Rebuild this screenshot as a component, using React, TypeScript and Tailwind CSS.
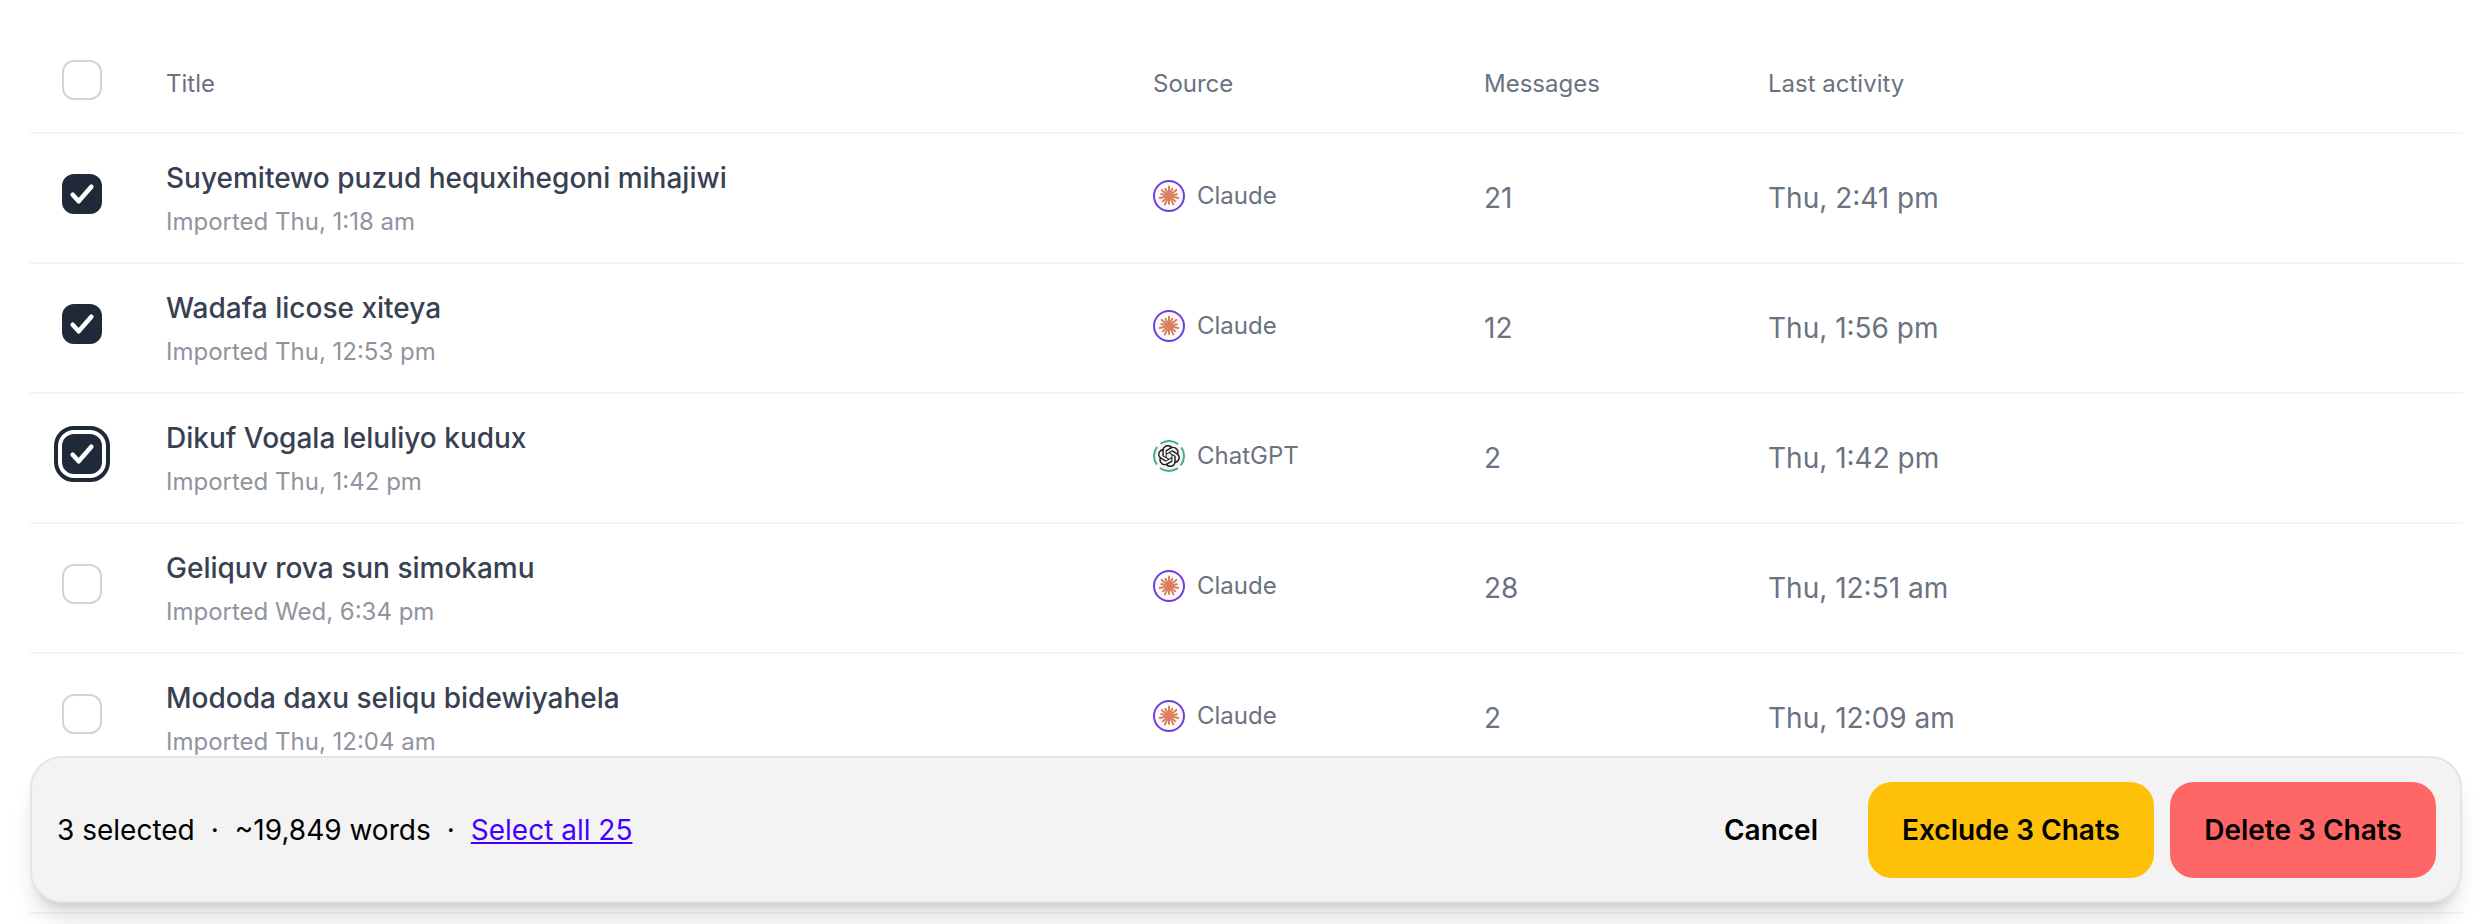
import { SiOpenai } from "react-icons/si";

interface Chat {
  title: string;
  imported: string;
  source: "Claude" | "ChatGPT";
  messages: number;
  activity: string;
  checked: boolean;
  focused?: boolean;
}

const chats: Chat[] = [
  { title: "Suyemitewo puzud hequxihegoni mihajiwi", imported: "Imported Thu, 1:18 am", source: "Claude", messages: 21, activity: "Thu, 2:41 pm", checked: true },
  { title: "Wadafa licose xiteya", imported: "Imported Thu, 12:53 pm", source: "Claude", messages: 12, activity: "Thu, 1:56 pm", checked: true },
  { title: "Dikuf Vogala leluliyo kudux", imported: "Imported Thu, 1:42 pm", source: "ChatGPT", messages: 2, activity: "Thu, 1:42 pm", checked: true, focused: true },
  { title: "Geliquv rova sun simokamu", imported: "Imported Wed, 6:34 pm", source: "Claude", messages: 28, activity: "Thu, 12:51 am", checked: false },
  { title: "Mododa daxu seliqu bidewiyahela", imported: "Imported Thu, 12:04 am", source: "Claude", messages: 2, activity: "Thu, 12:09 am", checked: false },
];

const rowGrid = "grid grid-cols-[136px_987px_331px_284px_1fr] items-center";

function Checkbox({ checked, focused }: { checked: boolean; focused?: boolean }) {
  if (!checked) {
    return <div className="ml-8 -mt-2 size-10 rounded-xl border-2 border-[#d1d5db] bg-white" />;
  }
  return (
    <div
      className={
        "ml-8 -mt-2 size-10 rounded-xl bg-[#1f2937] flex items-center justify-center" +
        (focused ? " outline-4 outline-offset-4 outline-[#1f2937]" : "")
      }
    >
      <svg viewBox="0 0 24 24" className="size-8" fill="none" stroke="white" strokeWidth="3.4" strokeLinecap="round" strokeLinejoin="round">
        <path d="M5 12.5l4.5 5L19 6.5" />
      </svg>
    </div>
  );
}

function ClaudeIcon() {
  const angles = [0, 24, 50, 78, 102, 130, 152, 180, 206, 230, 258, 284, 310, 334];
  return (
    <svg viewBox="0 0 32 32" className="size-8 shrink-0">
      <circle cx="16" cy="16" r="15" fill="#fbfaf8" stroke="#6d3ce6" strokeWidth="2" />
      {angles.map((a, i) => (
        <line
          key={a}
          x1="16"
          y1="16"
          x2="16"
          y2={i % 2 ? 8 : 6.5}
          stroke="#d9805f"
          strokeWidth="2"
          strokeLinecap="round"
          transform={`rotate(${a} 16 16)`}
        />
      ))}
    </svg>
  );
}

function ChatGptIcon() {
  return (
    <div className="relative size-8 shrink-0 flex items-center justify-center">
      <svg viewBox="0 0 32 32" className="absolute inset-0 size-8">
        <circle cx="16" cy="16" r="14" fill="#f5f5f5" />
        <circle cx="16" cy="16" r="15" fill="none" stroke="#4aaa87" strokeWidth="2" strokeDasharray="19 4.56" transform="rotate(54 16 16)" />
      </svg>
      <SiOpenai className="relative size-[22px] text-[#1c1c1c]" />
    </div>
  );
}

function Row({ chat }: { chat: Chat }) {
  return (
    <div className={rowGrid + " h-[130px] border-b-2 border-[#f3f4f6]"}>
      <Checkbox checked={chat.checked} focused={chat.focused} />
      <div>
        <div className="text-[28px] leading-10 font-medium text-[#374151]">{chat.title}</div>
        <div className="text-2xl leading-8 text-[#8f949e] mt-2">{chat.imported}</div>
      </div>
      <div className="flex items-center gap-3 -mt-1">
        {chat.source === "Claude" ? <ClaudeIcon /> : <ChatGptIcon />}
        <span className="text-2xl text-[#6b7280]">{chat.source}</span>
      </div>
      <div className="text-[28px] text-[#6b7280]">{chat.messages}</div>
      <div className="text-[28px] text-[#6b7280]">{chat.activity}</div>
    </div>
  );
}

export default function App() {
  return (
    <div className="relative h-[924px] overflow-hidden bg-white font-['Inter',sans-serif]">
      <div className="ml-[30px] mr-[21px] mt-[30px]">
        <div className={rowGrid + " h-[104px] pt-[5px] border-b-2 border-[#f3f4f6] text-2xl text-[#6b7280]"}>
          <Checkbox checked={false} />
          <div>Title</div>
          <div>Source</div>
          <div>Messages</div>
          <div>Last activity</div>
        </div>
        {chats.map((chat) => (
          <Row key={chat.title} chat={chat} />
        ))}
        {/* row hidden behind the bar */}
        <div className="h-[130px] border-b-2 border-[#f3f4f6]" />
      </div>

      {/* Selection bar */}
      <div className="absolute left-[30px] right-[22px] top-[756px] h-[147px] rounded-[32px] border-2 border-[#e5e5e5] bg-[#f3f3f3] shadow-[0_20px_25px_-5px_rgba(0,0,0,0.12),0_8px_10px_-6px_rgba(0,0,0,0.14)] flex items-center justify-between pl-[25px] pr-6">
        <div className="flex items-center text-[28px] text-black">
          <span>3 selected</span>
          <span className="mx-4">·</span>
          <span>~19,849 words</span>
          <span className="mx-4">·</span>
          <span className="text-[#4400ff] underline">Select all 25</span>
        </div>
        <div className="flex items-center">
          <span className="mr-[50px] text-[28px] font-semibold text-black">Cancel</span>
          <button className="h-24 w-[286px] rounded-3xl bg-[#ffc107] text-[28px] font-semibold text-black">Exclude 3 Chats</button>
          <button className="ml-4 h-24 w-[266px] rounded-3xl bg-[#ff6666] text-[28px] font-semibold text-black">Delete 3 Chats</button>
        </div>
      </div>
    </div>
  );
}
